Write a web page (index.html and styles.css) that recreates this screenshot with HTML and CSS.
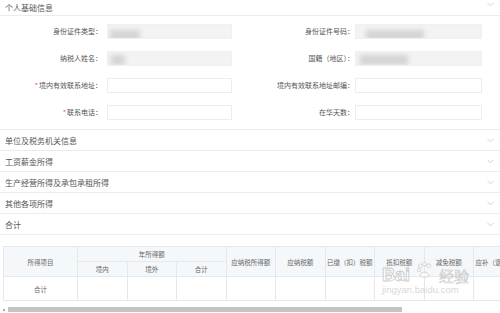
FILE: index.html
```html
<!DOCTYPE html>
<html lang="zh">
<head>
<meta charset="utf-8">
<link rel="stylesheet" href="styles.css">
</head>
<body>
<div class="page">
  <div class="sec-title">
    <span>个人基础信息</span>
    <svg class="chev" viewBox="0 0 8 5"><path d="M0.5 0.5 L4 4 L7.5 0.5"/></svg>
  </div>
  <div class="form">
    <div class="lbl">身份证件类型：</div>
    <div class="inp filled"><span class="blur b1"></span></div>
    <div class="lbl">身份证件号码：</div>
    <div class="inp filled"><span class="blur b3"></span></div>

    <div class="lbl">纳税人姓名：</div>
    <div class="inp filled"><span class="blur b2"></span></div>
    <div class="lbl">国籍（地区）：</div>
    <div class="inp filled"><span class="blur b4"></span></div>

    <div class="lbl"><i class="req">*</i>境内有效联系地址：</div>
    <div class="inp"></div>
    <div class="lbl">境内有效联系地址邮编：</div>
    <div class="inp"></div>

    <div class="lbl"><i class="req">*</i>联系电话：</div>
    <div class="inp"></div>
    <div class="lbl">在华天数：</div>
    <div class="inp"></div>
  </div>

  <div class="sec-head"><span>单位及税务机关信息</span><svg class="chev" viewBox="0 0 8 5"><path d="M0.5 0.5 L4 4 L7.5 0.5"/></svg></div>
  <div class="sec-head"><span>工资薪金所得</span><svg class="chev" viewBox="0 0 8 5"><path d="M0.5 0.5 L4 4 L7.5 0.5"/></svg></div>
  <div class="sec-head"><span>生产经营所得及承包承租所得</span><svg class="chev" viewBox="0 0 8 5"><path d="M0.5 0.5 L4 4 L7.5 0.5"/></svg></div>
  <div class="sec-head"><span>其他各项所得</span><svg class="chev" viewBox="0 0 8 5"><path d="M0.5 0.5 L4 4 L7.5 0.5"/></svg></div>
  <div class="sec-head"><span>合计</span><svg class="chev" viewBox="0 0 8 5"><path d="M0.5 0.5 L4 4 L7.5 0.5"/></svg></div>

  <div class="table-wrap">
    <table class="sum">
      <colgroup>
        <col class="c0"><col class="c1"><col class="c1"><col class="c1"><col class="c1"><col class="c1"><col class="c1"><col class="c1"><col class="c1"><col class="c1">
      </colgroup>
      <thead>
        <tr class="h1">
          <th rowspan="2">所得项目</th>
          <th colspan="3">年所得额</th>
          <th rowspan="2">应纳税所得额</th>
          <th rowspan="2">应纳税额</th>
          <th rowspan="2">已缴（扣）税额</th>
          <th rowspan="2">抵扣税额</th>
          <th rowspan="2">减免税额</th>
          <th rowspan="2">应补（退）税额</th>
        </tr>
        <tr class="h2">
          <th>境内</th><th>境外</th><th>合计</th>
        </tr>
      </thead>
      <tbody>
        <tr class="d">
          <td>合计</td><td></td><td></td><td></td><td></td><td></td><td></td><td></td><td></td><td></td>
        </tr>
      </tbody>
    </table>
    <div class="watermark">
      <span class="wm-bai">Bai</span>
      <svg class="wm-paw" viewBox="0 0 20 20"><circle cx="5" cy="5" r="2.2"/><circle cx="10" cy="3" r="2.2"/><circle cx="15" cy="5" r="2.2"/><circle cx="3.5" cy="10" r="2"/><path d="M5 17 C5 11 15 11 15 17 C15 19 5 19 5 17 Z"/></svg>
      <span class="wm-jy">经验</span>
      <span class="wm-url">jingyan.baidu.com</span>
    </div>
  </div>

  <div class="scrollbar">
    <span class="arrow"></span>
    <span class="thumb"></span>
  </div>
</div>
</body>
</html>
```
FILE: styles.css
```css
html, body {
  margin: 0;
  padding: 0;
  background: #fff;
  overflow: hidden;
}
body {
  font-family: "Noto Sans CJK SC", "Noto Sans", sans-serif;
  color: #555;
  width: 500px;
  height: 313px;
}
.page {
  width: 500px;
  position: relative;
}
.sec-title {
  height: 15px;
  border-bottom: 1px solid #ececec;
  display: flex;
  align-items: center;
  justify-content: space-between;
  padding: 0 6px 0 5px;
  font-size: 8px;
  line-height: 1;
  color: #555;
}
.sec-title .chev {
  margin-top: -7px;
}
.chev {
  width: 7px;
  height: 5px;
  fill: none;
  stroke: #c8c8c8;
  stroke-width: 1;
}
.form {
  display: grid;
  grid-template-columns: 102px 125px 115px 125px;
  column-gap: 5px;
  row-gap: 12px;
  padding: 8px 0 9px 0;
  border-bottom: 1px solid #ececec;
}
.form > .lbl:nth-child(4n+3) {
  margin-left: -5px;
  margin-right: -2px;
}
.form > .inp:nth-child(4n) {
  margin-left: -2px;
}
.lbl {
  text-align: right;
  font-size: 7px;
  line-height: 15px;
  color: #555;
  white-space: nowrap;
}
.req {
  font-style: normal;
  color: #e05050;
  margin-right: 1px;
}
.inp {
  height: 13px;
  border: 1px solid #ededed;
  background: #fff;
  position: relative;
  overflow: hidden;
}
.inp.filled {
  background: #f3f3f3;
  border-color: #f0f0f0;
}
.blur {
  position: absolute;
  top: 3px;
  height: 10px;
  background: #d4d4d4;
  filter: blur(2.5px);
}
.b1 { left: 2px; width: 30px; top: 5px; }
.b2 { left: 3px; width: 14px; }
.b3 { left: 10px; width: 58px; top: 5px; }
.b4 { left: 4px; width: 48px; }
.sec-head {
  height: 19px;
  border-bottom: 1px solid #ececec;
  display: flex;
  align-items: center;
  justify-content: space-between;
  padding: 1px 6px 0 5px;
  font-size: 8px;
  color: #555;
}
.sec-head span {
  line-height: 1;
}
.table-wrap {
  position: relative;
  margin-top: 11px;
  padding-left: 3px;
  overflow: hidden;
  height: 56px;
}
.sum {
  border-collapse: collapse;
  table-layout: fixed;
  width: 519px;
  font-size: 6.5px;
  color: #666;
}
.c0 { width: 74px; }
.c1 { width: 49.5px; }
.sum th, .sum td {
  border: 1px solid #e4e9ee;
  text-align: center;
  font-weight: normal;
  padding: 0;
  white-space: nowrap;
  overflow: hidden;
}
.sum thead th {
  background: #f4f8fb;
}
.h1 th, .h2 th {
  height: 14px;
}
.d td {
  height: 23px;
}
.watermark {
  position: absolute;
  left: 380px;
  top: 17px;
  width: 100px;
  height: 38px;
  pointer-events: none;
}
.wm-bai {
  position: absolute;
  left: 2px;
  top: 3px;
  font-family: "Liberation Sans", sans-serif;
  font-size: 18px;
  font-weight: bold;
  line-height: 1;
  color: rgba(255, 255, 255, 0.6);
  -webkit-text-stroke: 0.8px rgba(170, 170, 170, 0.65);
}
.wm-paw {
  position: absolute;
  left: 36px;
  top: -2px;
  width: 17px;
  height: 18px;
  fill: rgba(255, 255, 255, 0.5);
  stroke: rgba(170, 170, 170, 0.65);
  stroke-width: 0.8;
}
.wm-jy {
  position: absolute;
  left: 59px;
  top: 5px;
  font-size: 15px;
  line-height: 1;
  color: rgba(255, 255, 255, 0.6);
  -webkit-text-stroke: 0.6px rgba(170, 170, 170, 0.65);
}
.wm-url {
  position: absolute;
  left: 2px;
  top: 22px;
  font-family: "Liberation Sans", sans-serif;
  font-size: 9.5px;
  line-height: 1;
  color: rgba(200, 200, 200, 0.75);
}
.scrollbar {
  margin-top: 5px;
  height: 5px;
  display: flex;
  align-items: stretch;
  padding-left: 3px;
}
.arrow {
  width: 2px;
  height: 2px;
  margin-top: 2px;
  background: #aaa;
}
.thumb {
  margin-left: 3px;
  width: 394px;
  background: #c4c4c4;
}
```
